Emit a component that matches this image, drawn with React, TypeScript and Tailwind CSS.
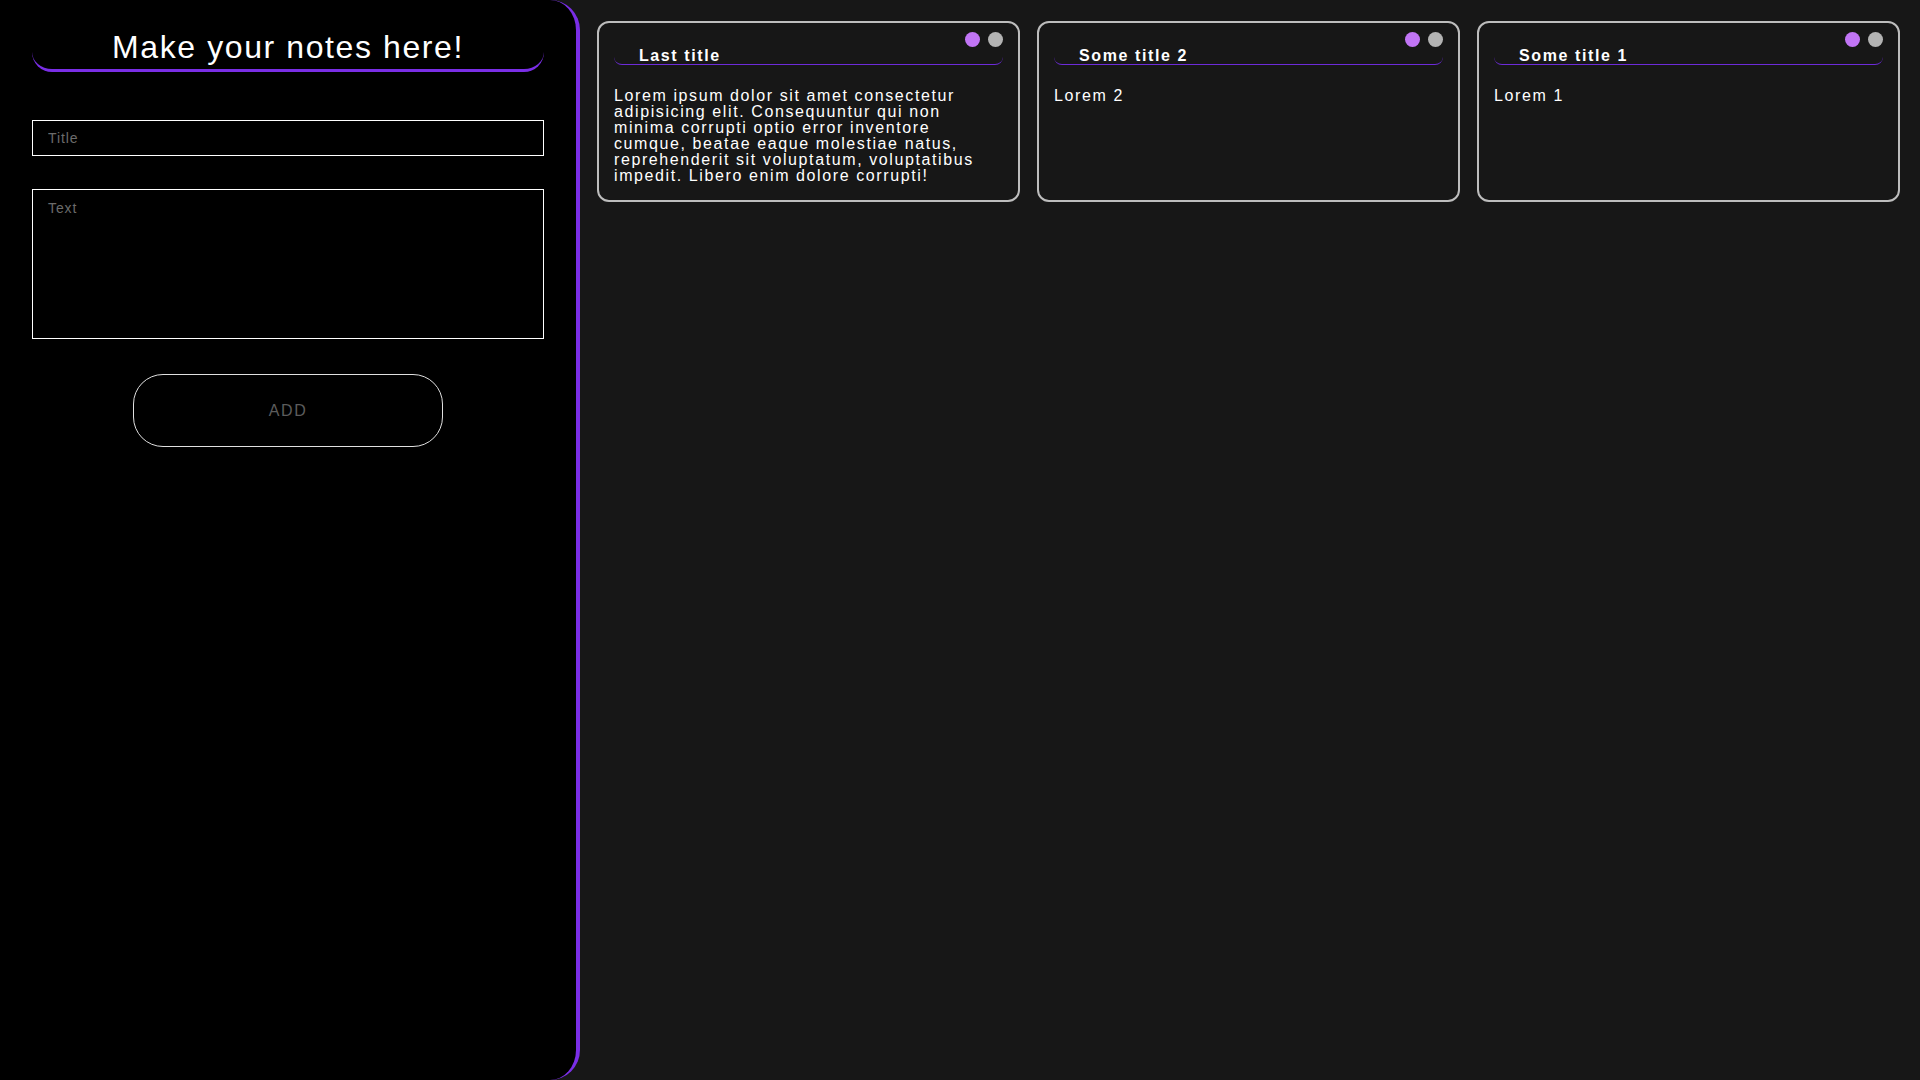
import { useState } from 'react';

type Note = { id: number; title: string; text: string };

const initialNotes: Note[] = [
  {
    id: 3,
    title: 'Last title',
    text: 'Lorem ipsum dolor sit amet consectetur adipisicing elit. Consequuntur qui non minima corrupti optio error inventore cumque, beatae eaque molestiae natus, reprehenderit sit voluptatum, voluptatibus impedit. Libero enim dolore corrupti!',
  },
  { id: 2, title: 'Some title 2', text: 'Lorem 2' },
  { id: 1, title: 'Some title 1', text: 'Lorem 1' },
];

export default function App() {
  const [notes, setNotes] = useState<Note[]>(initialNotes);
  const [title, setTitle] = useState('');
  const [text, setText] = useState('');

  const addNote = () => {
    if (!title && !text) return;
    setNotes([{ id: Date.now(), title, text }, ...notes]);
    setTitle('');
    setText('');
  };

  return (
    <div className="flex h-screen bg-[#171717] text-white font-['Liberation_Sans',Arial,sans-serif] overflow-hidden">
      <aside className="w-[580px] shrink-0 bg-black border-r-4 border-[#7a2ee6] rounded-r-[30px] flex flex-col items-center px-8 pt-[29px]">
        <h1 className="w-full text-center text-[32px] leading-[37px] tracking-[1.6px] pb-[3px] border-b-[3px] border-[#7a2ee6] rounded-b-[20px]">
          Make your notes here!
        </h1>

        <input
          value={title}
          onChange={(e) => setTitle(e.target.value)}
          placeholder="Title"
          className="mt-12 w-full h-9 bg-black border border-white px-[15px] text-[14px] tracking-[0.9px] text-white placeholder:text-[#6b6b6b] outline-none"
        />

        <textarea
          value={text}
          onChange={(e) => setText(e.target.value)}
          placeholder="Text"
          className="mt-[33px] w-full h-[150px] bg-black border border-white px-[15px] py-[8px] text-[14px] tracking-[0.9px] text-white placeholder:text-[#6b6b6b] outline-none resize-none"
        />

        <button
          onClick={addNote}
          className="mt-[35px] w-[310px] h-[73px] rounded-[30px] border border-[#e0e0e0] bg-black text-[16px] tracking-[1.6px] text-[#5c5c5c]"
        >
          ADD
        </button>
      </aside>

      <main className="flex-1 grid grid-cols-3 gap-[17px] pl-[17px] pr-5 pt-[21px] content-start">
        {notes.map((note) => (
          <NoteCard key={note.id} note={note} onDelete={() => setNotes(notes.filter((n) => n.id !== note.id))} />
        ))}
      </main>
    </div>
  );
}

function NoteCard({ note, onDelete }: { note: Note; onDelete: () => void }) {
  return (
    <div className="h-[181px] border-2 border-[#bdbdbd] rounded-[12px] bg-[#171717] px-[15px] overflow-hidden">
      <div className="h-[42px] flex justify-between border-b border-[#6d2bd9] rounded-b-[8px]">
        <h2 className="self-end pl-[25px] text-[16px] leading-[17px] font-bold tracking-[1.6px]">{note.title}</h2>
        <div className="flex gap-2 mt-[9px] self-start">
          <button className="w-[15px] h-[15px] rounded-full bg-[#c175f5]" />
          <button onClick={onDelete} className="w-[15px] h-[15px] rounded-full bg-[#b3b3b3]" />
        </div>
      </div>
      <p className="mt-[23px] text-[16px] leading-4 tracking-[1.6px]">{note.text}</p>
    </div>
  );
}
